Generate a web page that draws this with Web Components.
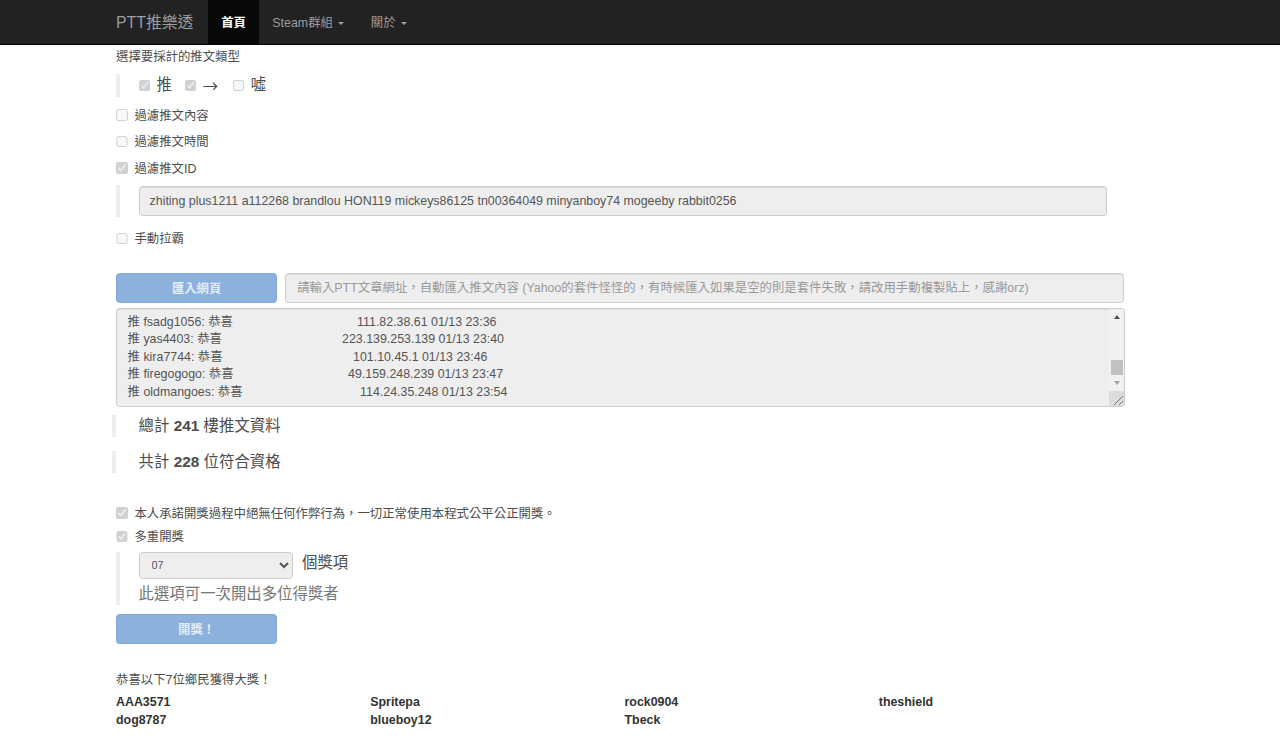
<!DOCTYPE html>
<html lang="zh-Hant">
<head>
<meta charset="utf-8">
<title>PTT推樂透</title>
<style>
html,body{margin:0;padding:0;background:#fff;}
body{font-family:"Liberation Sans","Noto Sans CJK TC",sans-serif;font-size:12.4px;line-height:17.6px;color:#4d4d4d;}
</style>
</head>
<body>
<ptt-nav></ptt-nav>
<ptt-page>
  <form-label style="margin-top:4.2px">選擇要採計的推文類型</form-label>
  <side-quote style="margin-top:7px;height:23px">
    <check-item checked>推</check-item>
    <check-item checked cjk>→</check-item>
    <check-item>噓</check-item>
  </side-quote>
  <check-row style="margin-top:9.5px">過濾推文內容</check-row>
  <check-row style="margin-top:8.8px">過濾推文時間</check-row>
  <check-row style="margin-top:8.8px" checked>過濾推文ID</check-row>
  <side-quote style="margin-top:8.1px;height:32px;width:991px">
    <text-field style="flex:1">zhiting plus1211 a112268 brandlou HON119 mickeys86125 tn00364049 minyanboy74 mogeeby rabbit0256</text-field>
  </side-quote>
  <check-row style="margin-top:13px">手動拉霸</check-row>
  <import-bar style="margin-top:26px">
    <action-button>匯入網頁</action-button>
    <text-field placeholder style="flex:1">請輸入PTT文章網址，自動匯入推文內容 (Yahoo的套件怪怪的，有時候匯入如果是空的則是套件失敗，請改用手動複製貼上，感謝orz)</text-field>
  </import-bar>
  <comment-box style="margin-top:5px">
    <comment-line gap="229.5">推 fsadg1056: 恭喜<span slot="ip">111.82.38.61 01/13 23:36</span></comment-line>
    <comment-line gap="214.5">推 yas4403: 恭喜<span slot="ip">223.139.253.139 01/13 23:40</span></comment-line>
    <comment-line gap="225.5">推 kira7744: 恭喜<span slot="ip">101.10.45.1 01/13 23:46</span></comment-line>
    <comment-line gap="220.5">推 firegogogo: 恭喜<span slot="ip">49.159.248.239 01/13 23:47</span></comment-line>
    <comment-line gap="232.5">推 oldmangoes: 恭喜<span slot="ip">114.24.35.248 01/13 23:54</span></comment-line>
  </comment-box>
  <side-quote wide style="margin-top:8px;height:22px"><span>總計 <b>241</b> 樓推文資料</span></side-quote>
  <side-quote wide style="margin-top:14px;height:22px"><span>共計 <b>228</b> 位符合資格</span></side-quote>
  <check-row style="margin-top:31px" checked>本人承諾開獎過程中絕無任何作弊行為，一切正常使用本程式公平公正開獎。</check-row>
  <check-row style="margin-top:5.6px" checked>多重開獎</check-row>
  <side-quote stack style="margin-top:6.5px;height:53px">
    <prize-picker>個獎項</prize-picker>
    <muted-note>此選項可一次開出多位得獎者</muted-note>
  </side-quote>
  <action-button style="margin-top:9.5px">開獎！</action-button>
  <form-label style="margin-top:28px">恭喜以下7位鄉民獲得大獎！</form-label>
  <winner-grid style="margin-top:4px">
    <b>AAA3571</b><b>Spritepa</b><b>rock0904</b><b>theshield</b>
    <b>dog8787</b><b>blueboy12</b><b>Tbeck</b>
  </winner-grid>
</ptt-page>
<script>
function def(name, css, html, init){
  customElements.define(name, class extends HTMLElement{
    constructor(){
      super();
      const r=this.attachShadow({mode:'open'});
      r.innerHTML='<style>'+css+'</style>'+html;
    }
    connectedCallback(){ if(init) init(this); }
  });
}
const syncCheck=el=>{el.shadowRoot.querySelector('input').checked=el.hasAttribute('checked');};
def('ptt-nav',`
  :host{display:flex;height:44px;background:#222;border-bottom:1px solid #080808;padding-left:102.8px;color:#9d9d9d;}
  a{display:flex;align-items:center;box-sizing:border-box;padding:3px 13.2px 0;color:#9d9d9d;text-decoration:none;white-space:nowrap;}
  .brand{font-size:15.84px;width:105.2px;padding-top:2px;}
  .active{color:#fff;background:#080808;font-weight:bold;}
  .caret{display:inline-block;margin-left:5.5px;border-top:3.5px solid currentColor;border-left:3.5px solid transparent;border-right:3.5px solid transparent;}
`,`<a class="brand" href="#">PTT推樂透</a>
   <a class="active" href="#">首頁</a>
   <a href="#">Steam群組<span class="caret"></span></a>
   <a href="#">關於<span class="caret"></span></a>`);
def('ptt-page',`:host{display:flex;flex-direction:column;align-items:flex-start;padding-left:116.4px;width:1017px;}`,`<slot></slot>`);
def('form-label',`:host{display:block;height:17.6px;margin-left:-.4px;}`,`<slot></slot>`);
def('check-row',`
  :host{display:flex;align-items:center;height:17.6px;}
  input{width:11.44px;height:11.44px;margin:0 6.6px 0 0;}
  span{display:block;padding-top:3px;height:17.6px;}
`,`<input type="checkbox" disabled><span><slot></slot></span>`,syncCheck);
def('check-item',`
  :host{display:inline-flex;align-items:center;font-size:15.4px;margin-right:13px;}
  :host([cjk]){font-family:"Noto Sans CJK TC","Liberation Sans",sans-serif;margin-right:14.6px;}
  input{width:11.44px;height:11.44px;margin:0 6.5px 0 0;}
`,`<input type="checkbox" disabled><slot></slot>`,syncCheck);
def('side-quote',`
  :host{display:flex;align-items:center;box-sizing:border-box;border-left:4.4px solid #eee;padding-left:18.2px;font-size:15.4px;line-height:22px;}
  :host([stack]){flex-direction:column;align-items:flex-start;justify-content:flex-start;}
  :host([wide]){margin-left:-4px;padding-left:22.2px;}
`,`<slot></slot>`);
def('text-field',`
  :host{display:flex;align-items:center;box-sizing:border-box;height:30px;background:#eee;border:1px solid #ccc;border-radius:3.5px;padding:0 10px;color:#555;font-size:12.4px;white-space:nowrap;overflow:hidden;box-shadow:inset 0 1px 1px rgba(0,0,0,.075);}
  :host([placeholder]){color:#999;padding-left:11.4px;}
`,`<slot></slot>`);
def('import-bar',`:host{display:flex;gap:8px;width:1008px;}`,`<slot></slot>`);
def('action-button',`
  :host{display:block;flex:none;}
  button{display:block;box-sizing:border-box;width:160.4px;height:30px;padding:0;background:#8cb1dd;border:1px solid #82a9d8;border-radius:3.5px;color:#e3ecf8;font:bold 12.32px "Liberation Sans","Noto Sans CJK TC",sans-serif;}
`,`<button type="button" disabled><slot></slot></button>`);
def('comment-box',`
  :host{display:flex;box-sizing:border-box;width:1009px;height:99px;background:#eee;border:1px solid #ccc;border-radius:3.5px;color:#555;overflow:hidden;box-shadow:inset 0 1px 1px rgba(0,0,0,.075);}
  .text{flex:1;padding:4.2px 10.2px;overflow:hidden;}
  .bar{flex:none;width:15px;display:flex;flex-direction:column;align-items:center;background:#f1f1f1;}
  .up,.down{width:0;height:0;border-left:3.5px solid transparent;border-right:3.5px solid transparent;}
  .up{margin-top:6px;border-bottom:4px solid #505050;}
  .thumb{width:12px;height:15px;background:#c1c1c1;margin-top:41px;}
  .down{margin-top:6px;border-top:4px solid #a3a3a3;}
  .grip{margin-top:auto;width:15px;height:15px;display:block;background:#dcdcdc;}
`,`<div class="text"><slot></slot></div>
   <div class="bar"><span class="up"></span><span class="thumb"></span><span class="down"></span>
   <svg class="grip" viewBox="0 0 15 15"><path d="M5 14 14 5M10 14l4-4" stroke="#777" stroke-width="1" fill="none"/></svg></div>`);
def('comment-line',`
  :host{display:flex;height:17.6px;white-space:nowrap;}
  .name{display:block;flex:none;}
`,`<span class="name"><slot></slot></span><slot name="ip"></slot>`,el=>{el.shadowRoot.querySelector('.name').style.width=el.getAttribute('gap')+'px';});
def('prize-picker',`
  :host{display:flex;align-items:flex-start;font-size:15.4px;line-height:20px;height:31px;}
  select{box-sizing:border-box;width:154px;height:26.4px;margin:0.5px 9.5px 0 0;padding:0 0 0 8px;background-color:#eee;border:1px solid #ccc;border-radius:3.5px;color:#555;opacity:1;font:10.8px "Liberation Sans",sans-serif;}
  span{display:block;padding-top:1px;}
`,`<select disabled><option>07</option></select><span><slot></slot></span>`);
def('muted-note',`:host{display:block;color:#777;font-size:15.4px;line-height:22px;}`,`<slot></slot>`);
def('winner-grid',`:host{display:grid;margin-left:-.4px;grid-template-columns:repeat(4,254.25px);width:1017px;grid-auto-rows:18px;color:#333;}`,`<slot></slot>`);
</script>
</body>
</html>
